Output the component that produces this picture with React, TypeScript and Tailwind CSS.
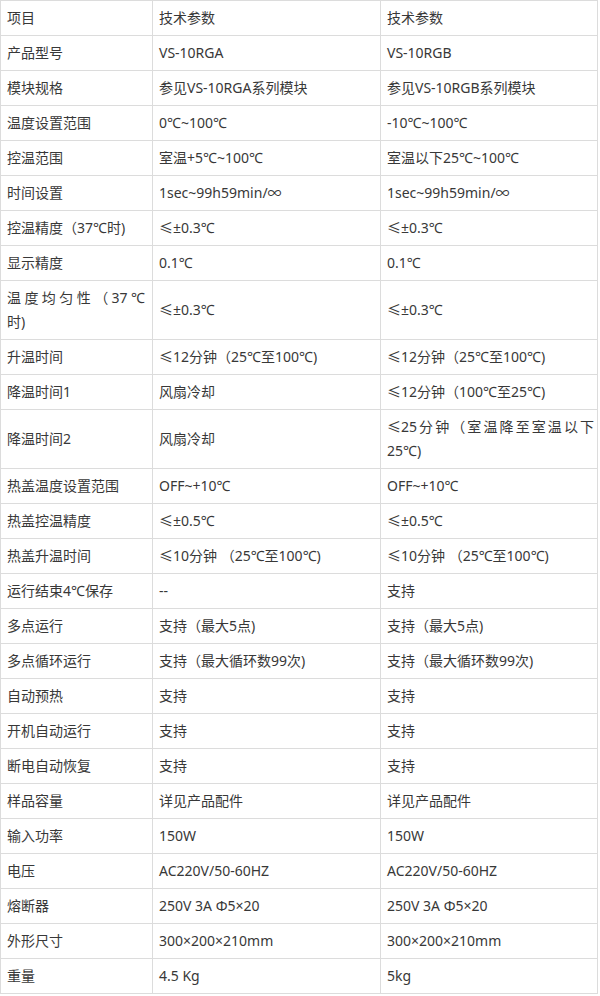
import type { ReactNode } from "react";

type Row = {
  label: ReactNode;
  a: ReactNode;
  b: ReactNode;
};

// a two-line cell whose first line is stretched to the full width
function Wrapped({ first, rest }: { first: string; rest: string }) {
  return (
    <>
      <span className="block [text-align-last:justify]">{first}</span>
      <span className="block">{rest}</span>
    </>
  );
}

const rows: Row[] = [
  { label: "项目", a: "技术参数", b: "技术参数" },
  { label: "产品型号", a: "VS-10RGA", b: "VS-10RGB" },
  { label: "模块规格", a: "参见VS-10RGA系列模块", b: "参见VS-10RGB系列模块" },
  { label: "温度设置范围", a: "0℃~100℃", b: "-10℃~100℃" },
  { label: "控温范围", a: "室温+5℃~100℃", b: "室温以下25℃~100℃" },
  { label: "时间设置", a: "1sec~99h59min/∞", b: "1sec~99h59min/∞" },
  { label: "控温精度（37℃时)", a: "≤±0.3℃", b: "≤±0.3℃" },
  { label: "显示精度", a: "0.1℃", b: "0.1℃" },
  {
    label: <Wrapped first="温度均匀性（37℃" rest="时)" />,
    a: "≤±0.3℃",
    b: "≤±0.3℃",
  },
  { label: "升温时间", a: "≤12分钟（25℃至100℃)", b: "≤12分钟（25℃至100℃)" },
  { label: "降温时间1", a: "风扇冷却", b: "≤12分钟（100℃至25℃)" },
  {
    label: "降温时间2",
    a: "风扇冷却",
    b: <Wrapped first="≤25分钟（室温降至室温以下" rest="25℃)" />,
  },
  { label: "热盖温度设置范围", a: "OFF~+10℃", b: "OFF~+10℃" },
  { label: "热盖控温精度", a: "≤±0.5℃", b: "≤±0.5℃" },
  { label: "热盖升温时间", a: "≤10分钟 （25℃至100℃)", b: "≤10分钟 （25℃至100℃)" },
  { label: "运行结束4℃保存", a: "--", b: "支持" },
  { label: "多点运行", a: "支持（最大5点)", b: "支持（最大5点)" },
  { label: "多点循环运行", a: "支持（最大循环数99次)", b: "支持（最大循环数99次)" },
  { label: "自动预热", a: "支持", b: "支持" },
  { label: "开机自动运行", a: "支持", b: "支持" },
  { label: "断电自动恢复", a: "支持", b: "支持" },
  { label: "样品容量", a: "详见产品配件", b: "详见产品配件" },
  { label: "输入功率", a: "150W", b: "150W" },
  { label: "电压", a: "AC220V/50-60HZ", b: "AC220V/50-60HZ" },
  { label: "熔断器", a: "250V 3A Φ5×20", b: "250V 3A Φ5×20" },
  { label: "外形尺寸", a: "300×200×210mm", b: "300×200×210mm" },
  { label: "重量", a: "4.5 Kg", b: "5kg" },
];

const cell =
  "border border-[#dcdcdc] py-[5px] pl-[6px] pr-[7px] align-middle text-justify leading-6";

export default function App() {
  return (
    <div className="min-h-[996px] w-[600px] bg-white font-['Noto_Sans','Noto_Sans_CJK_SC',sans-serif] text-[14px] text-[#383838]">
      <table className="w-[597px] table-fixed border-collapse">
        <colgroup>
          <col className="w-[152px]" />
          <col className="w-[228px]" />
          <col className="w-[217px]" />
        </colgroup>
        <tbody>
          {rows.map((row, i) => (
            <tr key={i}>
              <td className={cell}>{row.label}</td>
              <td className={cell}>{row.a}</td>
              <td className={`${cell} !pr-[3px]`}>{row.b}</td>
            </tr>
          ))}
        </tbody>
      </table>
    </div>
  );
}
